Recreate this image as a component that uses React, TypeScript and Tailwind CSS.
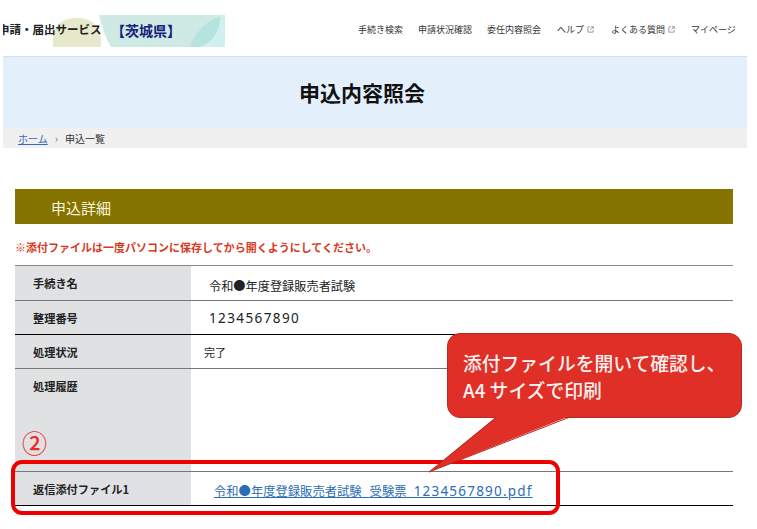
import React from 'react';

const font = "font-['Noto_Sans_CJK_JP','Noto_Sans',sans-serif]";

const navItems = [
    { label: '手続き検索', width: 'w-[45px]' },
    { label: '申請状況確認', width: 'w-[54px]' },
    { label: '委任内容照会', width: 'w-[55px]' },
    { label: 'ヘルプ', width: 'w-[39px]', external: true },
    { label: 'よくある質問', width: 'w-[65px]', external: true },
    { label: 'マイページ', width: 'w-[45px]' },
];

const ExternalIcon = () => (
    <svg width="7" height="7" viewBox="0 0 8 8" fill="none" stroke="#777" strokeWidth="0.8" className="shrink-0">
        <path d="M3.5 1H1v6h6V4.5M4.5 .8h2.7v2.7M7 1L3.8 4.2" />
    </svg>
);

const LogoBackground = () => (
    <svg width="172" height="32" viewBox="0 0 172 32" className="absolute left-[53px] top-[15px]">
        <path d="M0 32V24C0 9 10 3 24 3s24 8 24 23v6z" fill="#e6e9cb" />
        <path d="M46 0h126v32H58C52 22 48 10 46 0z" fill="#cfe9e4" />
        <path d="M150 0h22v32h-28c14-6 22-18 24-32z" fill="#cff0ee" />
        <path d="M137 32C142 18 152 6 167 2c0 14-6 24-20 30z" fill="#b5e3df" />
    </svg>
);

const Row = ({ label, height, border, children }: { label: string; height: string; border: string; children?: React.ReactNode }) => (
    <div className={`flex ${height} border-b ${border}`}>
        <div className="w-[176px] shrink-0 bg-[#dfe1e3] pl-[18px] pt-[9px] text-[11.2px] leading-[16px] font-bold text-[#222] whitespace-nowrap">{label}</div>
        <div className="flex-1 bg-white">{children}</div>
    </div>
);

const App = () => {
    return (
        <div className={`relative w-[757px] h-[529px] overflow-hidden bg-white text-[#222] ${font}`}>
            <header className="relative h-[56px] flex items-center justify-between pr-[21px]">
                <LogoBackground />
                <div className="relative flex items-center h-[32px] mt-[4px] ml-[3px] overflow-hidden">
                    <span className="text-[11.5px] font-bold text-[#222] w-[110px] -ml-[5px] shrink-0 whitespace-nowrap">申請・届出サービス</span>
                    <span className="text-[14px] font-bold text-[#14207a] whitespace-nowrap ml-[3px]">【茨城県】</span>
                </div>
                <nav className="flex gap-[15px] text-[9px] text-[#333] mt-[3px]">
                    {navItems.map((item) => (
                        <span key={item.label} className={`flex items-center gap-[3px] whitespace-nowrap ${item.width}`}>
                            {item.label}
                            {item.external && <ExternalIcon />}
                        </span>
                    ))}
                </nav>
            </header>

            <div className="ml-[3px] w-[744px]">
                <div className="h-[72px] bg-[#e4effc] border-t border-[#d5dfe8] flex items-center justify-center pr-[26px] text-[21px] font-bold text-[#111]">
                    申込内容照会
                </div>
                <div className="h-[20px] bg-[#f0f0f0] flex items-center pl-[15px] text-[10px] text-[#333]">
                    <a className="underline text-[#3a68b5]">ホーム</a>
                    <span className="mx-[7px] text-[#777] text-[11px] leading-none">›</span>
                    <span>申込一覧</span>
                </div>
            </div>

            <main className="ml-[15px] w-[718px] mt-[41px]">
                <div className="h-[35px] bg-[#857400] flex items-center pl-[36px] pt-[3px] text-[15px] text-[#f6f3dc]">申込詳細</div>
                <p className="mt-[15px] h-[26px] text-[11px] leading-[16px] font-bold text-[#d83a1e] whitespace-nowrap">
                    ※添付ファイルは一度パソコンに保存してから開くようにしてください。
                </p>
                <div className="border-t border-[#888]">
                    <Row label="手続き名" height="h-[35px]" border="border-[#777]">
                        <p className="pl-[18px] pt-[11px] text-[12.2px] leading-[18px]">令和●年度登録販売者試験</p>
                    </Row>
                    <Row label="整理番号" height="h-[34px]" border="border-black">
                        <p className="pl-[18px] pt-[8px] text-[13.5px] leading-[18px] tracking-[1.4px] font-['Noto_Sans',sans-serif]">1234567890</p>
                    </Row>
                    <Row label="処理状況" height="h-[34px]" border="border-[#777]">
                        <p className="pl-[13px] pt-[9px] text-[11px] leading-[16px]">完了</p>
                    </Row>
                    <Row label="処理履歴" height="h-[103px]" border="border-[#777]" />
                    <Row label="返信添付ファイル1" height="h-[34px]" border="border-black">
                        <a className="block pl-[23px] pt-[10px] text-[12.3px] leading-[18px] underline text-[#2a6db5] whitespace-nowrap">
                            令和●年度登録販売者試験
                            <span className="text-[13.5px] tracking-[2px] font-['Noto_Sans',sans-serif]">_</span>
                            受験票
                            <span className="text-[13.5px] tracking-[1.2px] font-['Noto_Sans',sans-serif]">_1234567890.pdf</span>
                        </a>
                    </Row>
                </div>
            </main>

            {/* annotations over the page */}
            <span className="absolute left-[22px] top-[425px] text-[25px] leading-[34px] font-medium text-[#ee2b2b]">②</span>
            <div className="absolute left-[11px] top-[460px] w-[549px] h-[55px] rounded-[11px] border-[4px] border-[#ee0000]" />
            <div className="absolute left-[447px] top-[333px] w-[295px] h-[85px] rounded-[13px] bg-[#df2f27] border border-[#b52a24] pl-[15px] pt-[15px] text-[18.8px] leading-[27px] font-medium text-[#fdf2f0] whitespace-nowrap">
                添付ファイルを開いて確認し、<br />A4 サイズで印刷
            </div>
            <svg width="160" height="60" viewBox="0 0 160 60" className="absolute left-[425px] top-[414px]">
                <path d="M4 58L72 2h73L4 58z" fill="#df2f27" />
                <path d="M72 3L4 58L145 3" fill="none" stroke="#b52a24" strokeWidth="1" />
            </svg>
        </div>
    );
};

export default App;
